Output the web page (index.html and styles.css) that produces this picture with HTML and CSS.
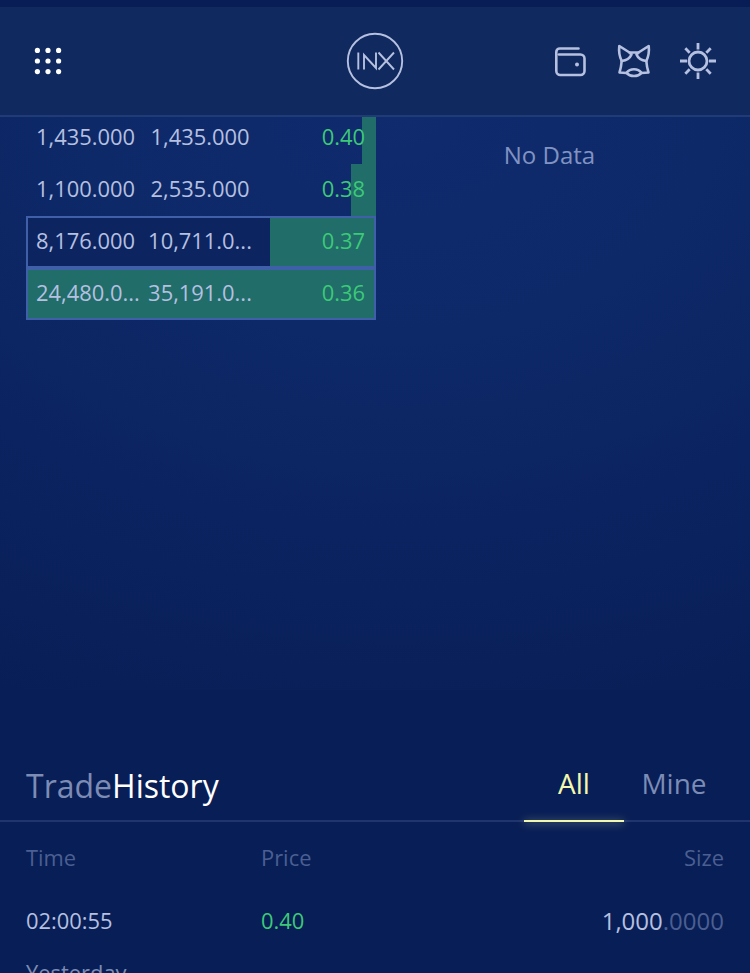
FILE: index.html
```html
<!DOCTYPE html>
<html lang="en">
<head>
    <meta charset="UTF-8">
    <meta name="viewport" content="width=device-width, initial-scale=1.0">
    <title>INX</title>
    <link rel="stylesheet" href="styles.css">
</head>
<body>
    <header class="header">
        <svg class="menu" width="28" height="28" viewBox="0 0 28 28" fill="#fff">
            <circle cx="3.4" cy="3.4" r="2.6"/><circle cx="14" cy="3.4" r="2.6"/><circle cx="24.6" cy="3.4" r="2.6"/>
            <circle cx="3.4" cy="14" r="2.6"/><circle cx="14" cy="14" r="2.6"/><circle cx="24.6" cy="14" r="2.6"/>
            <circle cx="3.4" cy="24.6" r="2.6"/><circle cx="14" cy="24.6" r="2.6"/><circle cx="24.6" cy="24.6" r="2.6"/>
        </svg>
        <svg class="logo" width="58" height="58" viewBox="0 0 58 58" fill="none" stroke="#b6c0e0" stroke-width="1.9">
            <circle cx="29" cy="29" r="27.2"/>
            <path d="M12.3 20.5v17M18 37.5V23l12 13V20.5M32.5 20.5l15.5 17M48 20.5l-15.5 17"/>
        </svg>
        <div class="icons">
            <svg width="38" height="40" viewBox="0 0 38 40" fill="none" stroke="#b6c0e0" stroke-width="2.6" stroke-linecap="round" stroke-linejoin="round">
                <path d="M27.5 7.5H8.8A3.5 3.5 0 0 0 5.3 11v19a4 4 0 0 0 4 4h20.200a4 4 0 0 0 4-4V17.500a4 4 0 0 0-4-4H8"/>
                <circle cx="26" cy="23.5" r="2" fill="#b6c0e0" stroke="none"/>
            </svg>
            <svg width="38" height="40" viewBox="0 0 38 40" fill="none" stroke="#b6c0e0" stroke-width="2.6" stroke-linecap="round" stroke-linejoin="round">
                <path d="M14.5 11.5L4.3 5c-.6 5 .2 10.500 2.400 15-.4 4.500-1 8-2.200 11.500L11.500 32"/>
                <path d="M23.5 11.5L33.700 5c.6 5-.2 10.500-2.400 15 .4 4.500 1 8 2.200 11.500L26.500 32"/>
                <path d="M14.5 11.5h9M14.500 11.500l2 2c-1.500 3.500-5 6-9.800 6.500M23.500 11.500l-2 2c1.500 3.500 5 6 9.800 6.500"/>
                <path d="M11.5 31.800c2-2.600 4.500-3.600 7.500-3.600s5.500 1 7.500 3.600c-2 2.400-4.500 3.200-7.500 3.200s-5.500-.8-7.500-3.200z"/>
            </svg>
            <svg width="38" height="40" viewBox="0 0 38 40" fill="none" stroke="#b6c0e0" stroke-width="2.8">
                <circle cx="19" cy="20" r="9"/>
                <path d="M19 2v6.500M19 31.500v6.500M1 20h7M30 20h7M6.300 7.300l4.400 4.400M27.300 28.300l4.400 4.400M31.700 7.300l-4.400 4.400M10.700 28.300l-4.400 4.400"/>
            </svg>
        </div>
    </header>

    <main class="book">
        <div class="bids">
            <div class="order">
                <div class="bar" style="width: 14px"></div>
                <span class="size">1,435.000</span><span class="total">1,435.000</span><span class="price">0.40</span>
            </div>
            <div class="order">
                <div class="bar" style="width: 25px"></div>
                <span class="size">1,100.000</span><span class="total">2,535.000</span><span class="price">0.38</span>
            </div>
            <div class="order own">
                <div class="bar" style="width: 104px"></div>
                <span class="size">8,176.000</span><span class="total">10,711.0...</span><span class="price">0.37</span>
            </div>
            <div class="order own">
                <div class="bar" style="width: 100%"></div>
                <span class="size">24,480.0...</span><span class="total">35,191.0...</span><span class="price">0.36</span>
            </div>
        </div>
        <div class="asks">No Data</div>
    </main>

    <section class="history">
        <div class="history-head">
            <h2>Trade<b>History</b></h2>
            <div class="tabs">
                <div class="tab active">All</div>
                <div class="tab">Mine</div>
            </div>
        </div>
        <div class="line labels">
            <span>Time</span><span>Price</span><span class="right">Size</span>
        </div>
        <div class="line trade">
            <span>02:00:55</span><span class="green">0.40</span><span class="right amount">1,000<i>.0000</i></span>
        </div>
        <div class="day">Yesterday</div>
    </section>
</body>
</html>
```
FILE: styles.css
```css
* {
    box-sizing: border-box;
}

body {
    margin: 0;
    height: 973px;
    overflow: hidden;
    display: flex;
    flex-direction: column;
    background: #081e56;
    color: #b6c0e0;
    font-family: "Open Sans", "Noto Sans", sans-serif;
    font-size: 21.9px;
}

.header {
    height: 117px;
    flex-shrink: 0;
    display: grid;
    grid-template-columns: 1fr 58px 1fr;
    align-items: center;
    padding: 0 33px;
    border-top: 7px solid #081d55;
    border-bottom: 2px solid #213b77;
    background: #10295f;
}

.menu {
    margin-left: 1px;
}

.icons {
    display: flex;
    justify-content: flex-end;
    gap: 26px;
}

.book {
    height: 573px;
    flex-shrink: 0;
    display: flex;
    overflow: hidden;
    background: radial-gradient(ellipse 900px 640px at 400px 0, #102b6e 0%, #0e2968 35%, #0a225e 75%, #081e56 100%);
}

.bids {
    width: 350px;
    margin: -5px 0 0 26px;
}

.order {
    position: relative;
    height: 52px;
    display: flex;
    align-items: center;
    padding: 0 11px 3px 10px;
    line-height: 30px;
}

.order span {
    position: relative;
}

/* depth bar behind the numbers */
.bar {
    position: absolute;
    top: 0;
    right: 0;
    bottom: 0;
    background: #206d6a;
}

.own {
    border: 2px solid #3f5fa8;
    padding: 0 9px 3px 8px;
    background: #0c2460;
}

.size {
    width: 106px;
    margin-right: 5px;
}

.total {
    width: 106px;
    text-align: center;
}

.price {
    margin-left: auto;
    color: #3cca77;
}

.asks {
    flex: 1;
    padding: 21px 27px 0 0;
    text-align: center;
    font-size: 24px;
    line-height: 34px;
    color: #8093c2;
}

.history-head {
    height: 132px;
    display: flex;
    justify-content: space-between;
    align-items: flex-end;
    padding: 0 26px;
    border-bottom: 2px solid #20356d;
}

h2 {
    margin: 0 0 12px;
    font-size: 32px;
    line-height: 44px;
    font-weight: 400;
    color: #7c8cb5;
}

h2 b {
    font-weight: 400;
    color: #fff;
}

.tabs {
    display: flex;
}

.tab {
    position: relative;
    width: 100px;
    height: 62px;
    margin-bottom: -2px;
    text-align: center;
    font-size: 28px;
    line-height: 46px;
    color: #7c8cb5;
}

.active {
    color: #f3f9ac;
}

.active::after {
    content: "";
    position: absolute;
    left: 0;
    right: 0;
    bottom: 0;
    height: 2px;
    background: #f3f9ac;
    box-shadow: 0 1px 8px #e6f0a0a0;
}

.line {
    display: grid;
    grid-template-columns: 235px 1fr 1fr;
    align-items: center;
    padding: 0 26px;
}

.labels {
    height: 70px;
    color: #4b5f92;
}

.trade {
    height: 57px;
}

.right {
    text-align: right;
}

.amount {
    font-size: 24px;
}

.amount i {
    font-style: normal;
    color: #4b5f92;
}

.green {
    color: #3cca77;
}

.day {
    padding: 9px 26px;
    line-height: 30px;
    color: #7c8cb5;
}
```
